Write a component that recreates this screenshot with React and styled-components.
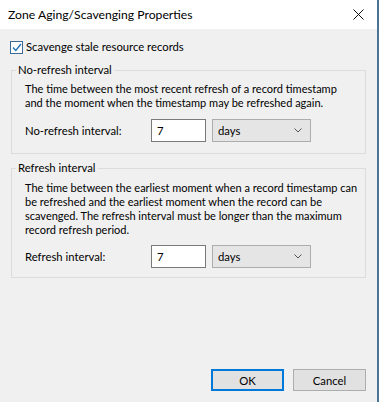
import React from "react";
import styled, { createGlobalStyle } from "styled-components";

const GlobalStyle = createGlobalStyle`
html, body {
  margin: 0;
  padding: 0;
  background: #ffffff;
}
body {
  font-family: Lato, "Noto Sans", sans-serif;
  font-size: 11px;
  color: #000;
}
`;

const Window = styled.div`
width: 377px;
height: 402px;
display: flex;
flex-direction: column;
background: #f0f0f0;
border-right: 2px solid #4a7498;
`;

const TitleBar = styled.div`
height: 29px;
flex-shrink: 0;
background: #ffffff;
display: flex;
align-items: center;
justify-content: space-between;
padding: 0 9px 0 8px;
`;

const Title = styled.span`
font-size: 12.2px;
color: #000;
`;

const CloseButton = styled.div`
width: 20px;
height: 20px;
display: flex;
align-items: center;
justify-content: center;
`;

const Body = styled.div`
flex: 1;
display: flex;
flex-direction: column;
padding: 11px 11px 11px 10px;
`;

const CheckRow = styled.label`
display: flex;
align-items: center;
gap: 3px;
height: 14px;
line-height: 14px;
font-size: 11.3px;
`;

const CheckBox = styled.span`
width: 11px;
height: 11px;
border: 1px solid #3d6a92;
background: #fff;
display: flex;
align-items: center;
justify-content: center;
`;

const Group = styled.fieldset`
margin: ${p => p.$top}px 0 0 1px;
padding: ${p => p.$pt}px 13px ${p => p.$pb}px 13px;
border: 1px solid #dcdcdc;
min-width: 0;
`;

const Legend = styled.legend`
padding: 0 2px;
margin-left: -9px;
line-height: 14px;
font-size: 11.3px;
`;

const Description = styled.p`
margin: 0;
line-height: 14px;
white-space: nowrap;
`;

const FieldRow = styled.div`
display: flex;
align-items: center;
margin-top: ${p => p.$top}px;
font-size: 11.3px;
`;

const FieldLabel = styled.span`
width: 126px;
`;

const NumberBox = styled.div`
width: 48px;
height: 21px;
border: 1px solid #7a7a7a;
background: #fff;
padding-left: 5px;
display: flex;
align-items: center;
`;

const UnitSelect = styled.div`
margin-left: 6px;
width: 84px;
height: 21px;
border: 1px solid #adadad;
background: #e5e5e5;
padding: 0 8px 0 5px;
display: flex;
align-items: center;
justify-content: space-between;
`;

const Spacer = styled.div`
flex: 1;
`;

const ButtonRow = styled.div`
display: flex;
justify-content: flex-end;
gap: 9px;
font-size: 11.3px;
`;

const Button = styled.div`
width: ${p => (p.$primary ? 69 : 71)}px;
height: ${p => (p.$primary ? 18 : 20)}px;
border: ${p => (p.$primary ? "2px solid #0078d7" : "1px solid #adadad")};
background: #e1e1e1;
display: flex;
align-items: center;
justify-content: center;
`;

const Chevron = () => (
  <svg width="8" height="5" viewBox="0 0 8 5">
    <path d="M0.5 0.5 L4 4 L7.5 0.5" fill="none" stroke="#555" strokeWidth="1" />
  </svg>
);

const IntervalField = ({ label, value, unit, top }) => (
  <FieldRow $top={top}>
    <FieldLabel>{label}</FieldLabel>
    <NumberBox>{value}</NumberBox>
    <UnitSelect>
      <span>{unit}</span>
      <Chevron />
    </UnitSelect>
  </FieldRow>
);

export default function App() {
  return (
    <>
      <GlobalStyle />
      <Window>
        <TitleBar>
          <Title>Zone Aging/Scavenging Properties</Title>
          <CloseButton>
            <svg width="11" height="11" viewBox="0 0 11 11">
              <path d="M0.5 0.5 L10.5 10.5 M10.5 0.5 L0.5 10.5" stroke="#111" strokeWidth="1" />
            </svg>
          </CloseButton>
        </TitleBar>
        <Body>
          <CheckRow>
            <CheckBox>
              <svg width="10" height="9" viewBox="0 0 10 9">
                <path d="M1 4.5 L3.8 7.5 L9 1" fill="none" stroke="#1b6fb5" strokeWidth="1.3" />
              </svg>
            </CheckBox>
            Scavenge stale resource records
          </CheckRow>

          <Group $top={9} $pt={5} $pb={11}>
            <Legend>No-refresh interval</Legend>
            <Description>
              The time between the most recent refresh of a record timestamp
              <br />
              and the moment when the timestamp may be refreshed again.
            </Description>
            <IntervalField label="No-refresh interval:" value="7" unit="days" top={9} />
          </Group>

          <Group $top={7} $pt={6} $pb={9}>
            <Legend>Refresh interval</Legend>
            <Description>
              The time between the earliest moment when a record timestamp can
              <br />
              be refreshed and the earliest moment when the record can be
              <br />
              scavenged. The refresh interval must be longer than the maximum
              <br />
              record refresh period.
            </Description>
            <IntervalField label="Refresh interval:" value="7" unit="days" top={8} />
          </Group>

          <Spacer />
          <ButtonRow>
            <Button $primary>OK</Button>
            <Button>Cancel</Button>
          </ButtonRow>
        </Body>
      </Window>
    </>
  );
}
